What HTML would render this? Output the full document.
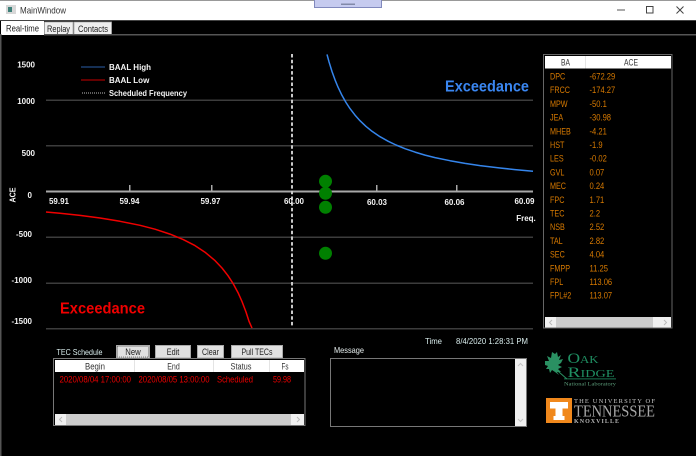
<!DOCTYPE html>
<html><head><meta charset="utf-8"><title>MainWindow</title>
<style>
html,body{margin:0;padding:0;background:#000;width:696px;height:456px;overflow:hidden}
svg{display:block;font-family:"Liberation Sans",sans-serif;filter:blur(.3px)}
.ax{font-size:8px;font-weight:bold;fill:#f4f4f4}
.o{font-size:9.500px;fill:#d87a00}
.h{font-size:9px;fill:#333;text-anchor:middle}
.r{font-size:9px;fill:#f00000}
.b{font-size:9px;fill:#222;text-anchor:middle}
.l{font-size:8.500px;fill:#d8ecec}
</style></head><body>
<svg width="696" height="456" viewBox="0 0 696 456" xmlns="http://www.w3.org/2000/svg">
<rect width="696" height="456" fill="#000"/>
<!-- title bar -->
<rect width="696" height="20" fill="#fff"/>
<rect width="696" height="1" fill="#999"/>
<rect y="20" width="696" height="1" fill="#444"/>
<rect x="6" y="5" width="10" height="9" fill="#d8d8d8"/>
<rect x="8" y="7" width="4" height="5" fill="#3d7f78"/>
<text x="20" y="13.500" font-size="9.500" fill="#333" textLength="46" lengthAdjust="spacingAndGlyphs">MainWindow</text>
<rect x="314.500" y="-1" width="67" height="8.500" fill="#c6cbef" stroke="#8189bd"/>
<rect x="341" y="3.500" width="14" height="1.500" fill="#8189a8"/>
<rect x="617" y="9.500" width="8" height="1" fill="#555"/>
<rect x="646.500" y="6.500" width="6.500" height="6.500" fill="none" stroke="#444"/>
<path d="M676.500 6.500L683.500 13.500M683.500 6.500L676.500 13.500" stroke="#444" fill="none"/>
<!-- tabs -->
<rect x="1" y="21" width="43" height="14" fill="#fff"/>
<rect x="44.500" y="22" width="28.500" height="12.500" fill="#eee" stroke="#aaa" stroke-width=".8"/>
<rect x="74" y="22" width="37.500" height="12.500" fill="#eee" stroke="#aaa" stroke-width=".8"/>
<text x="6" y="31.500" font-size="9" fill="#222" textLength="33" lengthAdjust="spacingAndGlyphs">Real-time</text>
<text x="47" y="32" font-size="9" fill="#222" textLength="23" lengthAdjust="spacingAndGlyphs">Replay</text>
<text x="78" y="32" font-size="9" fill="#222" textLength="30" lengthAdjust="spacingAndGlyphs">Contacts</text>
<rect x="44" y="34" width="652" height="1.500" fill="#555"/>
<rect x="0" y="34" width="1.500" height="422" fill="#555"/>
<!-- grid -->
<g fill="#3c3c3c">
<rect x="46" y="99.500" width="487" height="1.500"/>
<rect x="46" y="145" width="487" height="1.500"/>
<rect x="46" y="236.500" width="487" height="1.500"/>
<rect x="46" y="282.500" width="487" height="1.500"/>
<rect x="46" y="328" width="487" height="1.500"/>
</g>
<rect x="46" y="190.500" width="487" height="2" fill="#a8a8a8"/>
<g fill="#a8a8a8">
<rect x="129" y="185" width="1.500" height="6"/>
<rect x="211" y="185" width="1.500" height="6"/>
<rect x="376" y="185" width="1.500" height="6"/>
<rect x="456" y="185" width="1.500" height="6"/>
</g>
<!-- curves -->
<path d="M327 54.400L329 61.800 332 71.500 335 79.800 338 87.100 342 95.400 346 102.500 350 108.600 355 115.100 360 120.700 366 126.400 372 131.300 380 136.700 388 141.200 396 145 405 148.700 415 152.100 425 155.100 435 157.600 450 160.700 465 163.400 480 165.600 500 168 515 169.600 533 171.200" fill="none" stroke="#3585eb" stroke-width="1.500" stroke-linejoin="round"/>
<path d="M46 212L60 213.300 80 215.400 100 218 120 221.300 140 225.300 155 229.200 170 234.100 183 239.400 195 245.600 205 252.200 215 260.600 222 268 228 275.700 233 283.400 238 292.600 242 301.500 246 312 249 321.300 252 328" fill="none" stroke="#f00000" stroke-width="1.500" stroke-linejoin="round"/>
<line x1="292" y1="54" x2="292" y2="326" stroke="#c8c8c8" stroke-width="2" stroke-dasharray="3.500 2.200"/>
<!-- dots -->
<g fill="#008000">
<circle cx="325.500" cy="181.300" r="6.500"/>
<circle cx="325.500" cy="193.300" r="6.500"/>
<circle cx="325.500" cy="207.300" r="6.500"/>
<circle cx="325.500" cy="253.300" r="6.500"/>
</g>
<!-- y labels -->
<g class="ax" text-anchor="end">
<text x="35" y="67.500">1500</text>
<text x="35" y="104">1000</text>
<text x="35" y="156">500</text>
<text x="32" y="198">0</text>
<text x="32" y="237">-500</text>
<text x="32" y="283">-1000</text>
<text x="32" y="324">-1500</text>
</g>
<text class="ax" transform="translate(15.500 195) rotate(-90)" text-anchor="middle" textLength="15" lengthAdjust="spacingAndGlyphs">ACE</text>
<!-- x labels -->
<g class="ax" text-anchor="middle">
<text x="59" y="204">59.91</text>
<text x="129.500" y="204">59.94</text>
<text x="210.500" y="204">59.97</text>
<text x="294" y="204">60.00</text>
<text x="377" y="205">60.03</text>
<text x="454.500" y="205">60.06</text>
<text x="524.500" y="204">60.09</text>
<text x="526" y="221">Freq.</text>
</g>
<!-- legend -->
<rect x="81" y="66.500" width="24" height="1" fill="#2a5ea8"/>
<rect x="81" y="79.500" width="24" height="1" fill="#c80000"/>
<line x1="82" y1="93" x2="105" y2="93" stroke="#bbb" stroke-dasharray="1 1"/>
<g class="ax">
<text x="109" y="70">BAAL High</text>
<text x="109" y="83">BAAL Low</text>
<text x="109" y="96" textLength="78" lengthAdjust="spacingAndGlyphs">Scheduled Frequency</text>
</g>
<text x="445" y="91.500" font-size="16" font-weight="bold" fill="#3a86f0" textLength="84" lengthAdjust="spacingAndGlyphs">Exceedance</text>
<text x="60" y="313.500" font-size="16" font-weight="bold" fill="#f00000" textLength="85" lengthAdjust="spacingAndGlyphs">Exceedance</text>
<!-- BA table -->
<rect x="543.500" y="54.500" width="128.500" height="273.500" fill="#000" stroke="#666"/>
<rect x="545" y="56" width="126" height="12.500" fill="#fff"/>
<rect x="585" y="56" width="1" height="12.500" fill="#e4e4e4"/>
<text class="h" x="565.500" y="65.500" textLength="9" lengthAdjust="spacingAndGlyphs">BA</text>
<text class="h" x="631" y="65.500" textLength="14" lengthAdjust="spacingAndGlyphs">ACE</text>
<g class="o" transform="translate(550 0) scale(.76 1)">
<text y="79.500">DPC</text>
<text y="93.200">FRCC</text>
<text y="106.900">MPW</text>
<text y="120.600">JEA</text>
<text y="134.300">MHEB</text>
<text y="148">HST</text>
<text y="161.700">LES</text>
<text y="175.400">GVL</text>
<text y="189.100">MEC</text>
<text y="202.800">FPC</text>
<text y="216.500">TEC</text>
<text y="230.200">NSB</text>
<text y="243.900">TAL</text>
<text y="257.600">SEC</text>
<text y="271.300">FMPP</text>
<text y="285">FPL</text>
<text y="298.700">FPL#2</text>
</g>
<g class="o" transform="translate(589.500 0) scale(.8 1)">
<text y="79.500">-672.29</text>
<text y="93.200">-174.27</text>
<text y="106.900">-50.1</text>
<text y="120.600">-30.98</text>
<text y="134.300">-4.21</text>
<text y="148">-1.9</text>
<text y="161.700">-0.02</text>
<text y="175.400">0.07</text>
<text y="189.100">0.24</text>
<text y="202.800">1.71</text>
<text y="216.500">2.2</text>
<text y="230.200">2.52</text>
<text y="243.900">2.82</text>
<text y="257.600">4.04</text>
<text y="271.300">11.25</text>
<text y="285">113.06</text>
<text y="298.700">113.07</text>
</g>
<rect x="545" y="317" width="126" height="10.500" fill="#f0f0f0"/>
<rect x="556" y="317" width="97" height="10.500" fill="#cdcdcd"/>
<path d="M552 320L549.500 322.500 552 325M664 320L666.500 322.500 664 325" fill="none" stroke="#bbb"/>
<!-- TEC schedule -->
<text class="l" x="56.500" y="355" textLength="46" lengthAdjust="spacingAndGlyphs">TEC Schedule</text>
<rect x="116.500" y="345.500" width="33" height="12.500" fill="#e1e1e1" stroke="#aaa"/>
<rect x="117.500" y="346.500" width="31" height="10.500" fill="none" stroke="#222" stroke-width=".6" stroke-dasharray="1 1"/>
<rect x="155.500" y="345.500" width="35" height="12.500" fill="#e1e1e1" stroke="#aaa"/>
<rect x="197.500" y="345.500" width="26" height="12.500" fill="#e1e1e1" stroke="#aaa"/>
<rect x="231.500" y="345.500" width="51" height="12.500" fill="#e1e1e1" stroke="#aaa"/>
<text class="b" x="133" y="355" textLength="15.500" lengthAdjust="spacingAndGlyphs">New</text>
<text class="b" x="173" y="355" textLength="12.500" lengthAdjust="spacingAndGlyphs">Edit</text>
<text class="b" x="210.500" y="355" textLength="17" lengthAdjust="spacingAndGlyphs">Clear</text>
<text class="b" x="257" y="355" textLength="31" lengthAdjust="spacingAndGlyphs">Pull TECs</text>
<rect x="53.500" y="358.500" width="251.500" height="67" fill="#000" stroke="#777"/>
<rect x="55" y="360" width="249" height="12" fill="#fff"/>
<g fill="#e4e4e4">
<rect x="134" y="360" width="1" height="12"/>
<rect x="213" y="360" width="1" height="12"/>
<rect x="269" y="360" width="1" height="12"/>
</g>
<text class="h" x="95" y="369.500" textLength="20" lengthAdjust="spacingAndGlyphs">Begin</text>
<text class="h" x="173.500" y="369.500" textLength="12.500" lengthAdjust="spacingAndGlyphs">End</text>
<text class="h" x="241" y="369.500" textLength="21" lengthAdjust="spacingAndGlyphs">Status</text>
<text class="h" x="285" y="369.500" textLength="7" lengthAdjust="spacingAndGlyphs">Fs</text>
<text class="r" x="59.500" y="382.500" textLength="71.500" lengthAdjust="spacingAndGlyphs">2020/08/04 17:00:00</text>
<text class="r" x="138.500" y="382.500" textLength="71" lengthAdjust="spacingAndGlyphs">2020/08/05 13:00:00</text>
<text class="r" x="217" y="382.500" textLength="36" lengthAdjust="spacingAndGlyphs">Scheduled</text>
<text class="r" x="273" y="382.500" textLength="18" lengthAdjust="spacingAndGlyphs">59.98</text>
<rect x="55" y="414" width="249" height="11" fill="#f0f0f0"/>
<rect x="66" y="414" width="225" height="11" fill="#cdcdcd"/>
<path d="M62 417L59.500 419.500 62 422M297 417L299.500 419.500 297 422" fill="none" stroke="#bbb"/>
<!-- Time & message -->
<text class="l" x="425" y="344" textLength="17" lengthAdjust="spacingAndGlyphs">Time</text>
<text class="l" x="456" y="344" textLength="72" lengthAdjust="spacingAndGlyphs">8/4/2020 1:28:31 PM</text>
<text x="334" y="353" font-size="8.500" fill="#e8f0f0" textLength="30" lengthAdjust="spacingAndGlyphs">Message</text>
<rect x="330.500" y="358.500" width="196" height="68" fill="#000" stroke="#777"/>
<rect x="515" y="359" width="11" height="67" fill="#f0f0f0"/>
<path d="M518 366L520.500 363.500 523 366M518 419L520.500 421.500 523 419" fill="none" stroke="#c4c4c4"/>
<!-- ORNL logo -->
<path d="M545 361L549 361 547 356 551 358 552 352 555 354 557 352 558 357 561 355 559 360 563 359 561 363 558 365 562 367 558 369 561 372 557 372 559 375 555 372 552 370 550 373 549 369 546 369 548 366 545 365Z" fill="#2a9062"/>
<path d="M552 366L567 379" stroke="#2a9062" stroke-width="1"/>
<text x="567.500" y="363" font-family="Liberation Serif" font-size="11" fill="#1f8f62" textLength="31" lengthAdjust="spacingAndGlyphs"><tspan font-size="15">O</tspan>AK</text>
<text x="567.500" y="377" font-family="Liberation Serif" font-size="11" fill="#1f8f62" textLength="47" lengthAdjust="spacingAndGlyphs"><tspan font-size="15">R</tspan>IDGE</text>
<rect x="564" y="378.500" width="52" height=".8" fill="#1f8f62"/>
<text x="564" y="385.500" font-family="Liberation Serif" font-size="5.500" fill="#5a9a78" textLength="52" lengthAdjust="spacingAndGlyphs">National Laboratory</text>
<!-- UT logo -->
<rect x="546" y="398" width="26" height="25" fill="#f0881c"/>
<path d="M550 402H568V408.500H562.500V416H564.500V420H553.500V416H555.500V408.500H550Z" fill="#fff"/>
<text x="574" y="403" font-family="Liberation Serif" font-size="6.500" fill="#c8c8c8" textLength="81" lengthAdjust="spacing">THE UNIVERSITY OF</text>
<text x="574" y="416.500" font-family="Liberation Serif" font-size="17" fill="#a8a8a8" textLength="81" lengthAdjust="spacingAndGlyphs">TENNESSEE</text>
<text x="574" y="423" font-family="Liberation Serif" font-size="6" font-weight="bold" fill="#b4b4b4" textLength="45" lengthAdjust="spacing">KNOXVILLE</text>
</svg>
</body></html>
